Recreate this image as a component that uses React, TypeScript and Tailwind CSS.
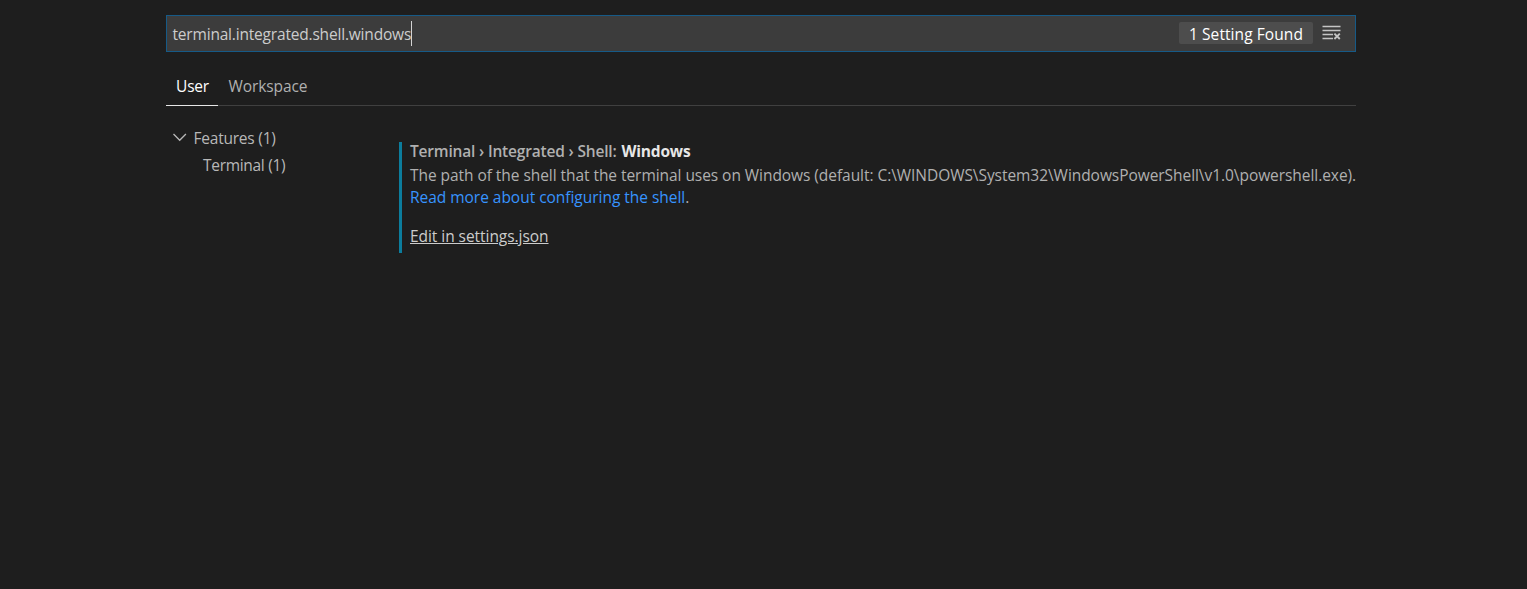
export default function App() {
  return (
    <div className="h-[589px] w-full overflow-hidden bg-[#1e1e1e] pt-[15px] pl-[166px] font-['Open_Sans','Noto_Sans',sans-serif] text-[15.5px] text-[#cccccc]">
      <div className="w-[1190px]">
        <div className="flex h-[37px] items-center border border-[#165a87] bg-[#3c3c3c] pl-[5.5px] pr-[14px]">
          <span className="w-[238.5px] pt-[2px] whitespace-nowrap tracking-[-0.19px]">terminal.integrated.shell.windows</span>
          <div className="h-[25px] w-px bg-[#d4d4d4]" />
          <div className="-mt-[2px] ml-auto flex h-[22px] w-[134px] items-center justify-center rounded-[2px] bg-[#4d4d4d] pt-[4px] tracking-[0.08px] text-white">1 Setting Found</div>
          <svg className="ml-[9px] -mt-[1px]" width="19" height="16" viewBox="0 0 19 16" fill="none" stroke="#c5c5c5" strokeWidth="1.3">
            <path d="M0.5 1.5h18M0.5 5.5h18M0.5 9.5h10.5M0.5 13.5h10.5" />
            <path d="M12.4 8.6l5.4 5.4M17.8 8.6l-5.4 5.4" strokeWidth="1.9" />
          </svg>
        </div>
        <div className="mt-[16px] flex h-[38px] border-b border-[#404040]">
          <div className="flex h-[38px] w-[52px] items-center justify-center border-b border-[#e7e7e7] pt-px pl-px tracking-[-0.2px] text-white">User</div>
          <div className="ml-[10.5px] flex items-center pt-px tracking-[-0.1px] text-[#b0b0b0]">Workspace</div>
        </div>
        <div className="flex">
          <div className="w-[233px] shrink-0 pt-[19px] leading-[27px] text-[#b8b8b8]">
            <div className="flex items-center pl-[7px]">
              <svg className="-mt-px" width="14" height="10" viewBox="0 0 14 10" fill="none" stroke="currentColor" strokeWidth="1.3"><path d="M0.5 1l6.2 6.3L12.9 1" /></svg>
              <span className="ml-[6.5px] tracking-[-0.22px]">Features (1)</span>
            </div>
            <div className="ml-[37px] tracking-[-0.3px]">Terminal (1)</div>
          </div>
          <div className="mt-[36px] h-[111px] border-l-[3px] border-[#0c7d9d] pl-2 whitespace-nowrap text-[#b0b0b0]">
            <div className="h-[22px] leading-[18px] font-semibold tracking-[-0.18px]">Terminal › Integrated › Shell: <span className="ml-px font-bold text-[#e7e7e7]">Windows</span></div>
            <div className="leading-[22px] tracking-[-0.054px]">The path of the shell that the terminal uses on Windows (default: C:\WINDOWS\System32\WindowsPowerShell\v1.0\powershell.exe).</div>
            <div className="leading-[22px] tracking-[-0.03px]"><a className="text-[#3794ff]">Read more about configuring the shell</a>.</div>
            <div className="mt-[17px] leading-[22px] tracking-[-0.05px] text-[#cccccc]"><a className="underline">Edit in settings.json</a></div>
          </div>
        </div>
      </div>
    </div>
  );
}
